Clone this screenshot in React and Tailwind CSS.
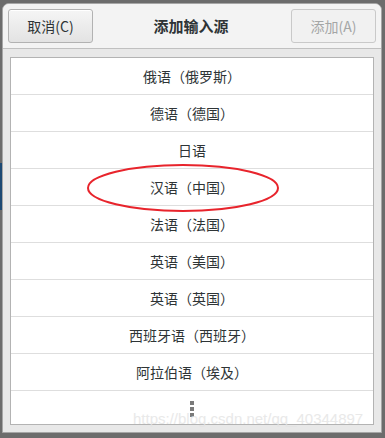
import React from 'react';

const languages = [
  '俄语（俄罗斯）',
  '德语（德国）',
  '日语',
  '汉语（中国）',
  '法语（法国）',
  '英语（美国）',
  '英语（英国）',
  '西班牙语（西班牙）',
  '阿拉伯语（埃及）',
];

const font = { fontFamily: '"Noto Sans CJK SC", "DejaVu Sans", sans-serif' };

export default function App() {
  return (
    <div className="relative w-[385px] h-[438px] overflow-hidden bg-[#6c6c6c]" style={font}>
      {/* window behind, left edge */}
      <div className="absolute left-0 top-[163px] w-[2px] h-[47px] bg-[#1d4a75]" />

      {/* Dialog */}
      <div className="relative ml-[2px] mt-[3px] w-[380px] h-[430px] rounded-t-[7px] bg-[#e8e8e8] border border-[#a6a6a6] flex flex-col">
        <header className="h-[45px] rounded-t-[6px] bg-[#f3f3f3] border-b border-[#c0c0c0] flex items-center justify-between px-[5px]">
          <button className="w-[85px] h-[34px] rounded-[3px] border border-[#b2b2b2] bg-gradient-to-b from-[#f5f5f5] to-[#e3e3e3] text-[14px] text-[#2e3436] shadow-[inset_0_1px_0_#ffffff]">
            取消(C)
          </button>
          <h1 className="text-[15px] font-bold text-[#2e3436] mr-[2px]">添加输入源</h1>
          <button className="w-[85px] h-[34px] rounded-[3px] border border-[#c9c9c9] bg-[#f1f1f1] text-[14px] text-[#a4a6a6]">
            添加(A)
          </button>
        </header>

        <div className="mx-[7px] mt-[8px] border border-[#b3b3b3] bg-white">
          {languages.map((l) => (
            <div
              key={l}
              className="h-[37px] border-b border-[#dedede] flex items-center justify-center text-[14px] text-[#2e3436]"
            >
              {l}
            </div>
          ))}
          <div className="h-[33px] flex items-center justify-center">
            <div className="flex flex-col gap-[2px] pt-[2px]">
              <span className="block w-[4px] h-[4px] bg-[#7a7a7a]" />
              <span className="block w-[4px] h-[4px] bg-[#7a7a7a]" />
              <span className="block w-[4px] h-[4px] bg-[#7a7a7a]" />
            </div>
          </div>
        </div>
      </div>

      {/* red annotation ellipse */}
      <svg className="absolute left-0 top-0 pointer-events-none" width="385" height="438">
        <ellipse cx="183" cy="188" rx="95" ry="23" fill="none" stroke="#e8242c" strokeWidth="2" />
      </svg>

      {/* watermark */}
      <div
        className="absolute left-[133px] top-[410px] text-[15px] leading-[18px] text-[#e4e4e4] opacity-80"
        style={{ fontFamily: '"Liberation Sans", Arial, sans-serif' }}
      >
        https://blog.csdn.net/qq_40344897
      </div>
    </div>
  );
}
